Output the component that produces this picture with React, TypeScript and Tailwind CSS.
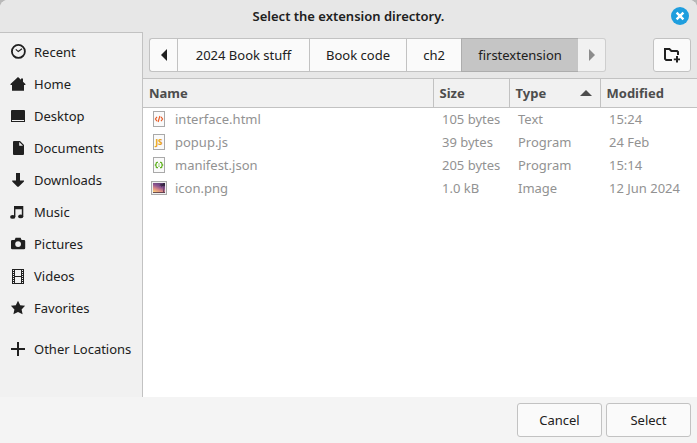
import React, { useState } from "react";

interface Place {
  name: string;
  icon: React.ReactNode;
}

interface FileEntry {
  name: string;
  size: string;
  type: string;
  modified: string;
  icon: React.ReactNode;
}

// 16px symbolic icons
function Symbolic({ children }: { children: React.ReactNode }) {
  return (
    <svg viewBox="0 0 16 16" className="size-4 shrink-0" fill="currentColor" aria-hidden="true">
      {children}
    </svg>
  );
}

// Small sheet of paper, used behind the file type marks
function Sheet({ children }: { children: React.ReactNode }) {
  return (
    <svg viewBox="0 0 16 16" className="size-4 shrink-0" aria-hidden="true">
      <rect x="2.5" y="0.5" width="11" height="15" fill="#fafafa" stroke="#a9a9a9" />
      {children}
    </svg>
  );
}

const places: Place[] = [
  {
    name: "Recent",
    icon: (
      <Symbolic>
        <circle cx="8.4" cy="7.4" r="6.5" fill="none" stroke="currentColor" strokeWidth="1.8" />
        <path d="M5.8 5.4 8.3 7.6 12 4.8" fill="none" stroke="currentColor" strokeWidth="1.2" />
      </Symbolic>
    ),
  },
  {
    name: "Home",
    icon: (
      <Symbolic>
        <path d="M8 1 11 3.8V2.5h2v3.2L15.4 8v1H14v5.7H2V9H.5V8z" />
      </Symbolic>
    ),
  },
  {
    name: "Desktop",
    icon: (
      <Symbolic>
        <path
          fillRule="evenodd"
          d="M2 2h12a1 1 0 0 1 1 1v11H1V3a1 1 0 0 1 1-1zM2 12v1h12v-1z"
        />
      </Symbolic>
    ),
  },
  {
    name: "Documents",
    icon: (
      <Symbolic>
        <path
          fillRule="evenodd"
          d="M4 1h6l4 4v9a1 1 0 0 1-1 1H4a1 1 0 0 1-1-1V2a1 1 0 0 1 1-1zM9.2 2v3.8H13z"
        />
      </Symbolic>
    ),
  },
  {
    name: "Downloads",
    icon: (
      <Symbolic>
        <path d="M6 1h4v7.6h4v.8L8.6 14.8H7.4L2.2 9.4v-.8H6z" />
      </Symbolic>
    ),
  },
  {
    name: "Music",
    icon: (
      <Symbolic>
        <path d="M4 2h9.3v10.4h-1.5V5.2H5.4v7.8H4z" />
        <ellipse cx="2.7" cy="12.9" rx="2.6" ry="1.9" />
        <ellipse cx="10.7" cy="12.4" rx="2.6" ry="1.9" />
      </Symbolic>
    ),
  },
  {
    name: "Pictures",
    icon: (
      <Symbolic>
        <path
          fillRule="evenodd"
          d="M5.6 1.7h5L11.6 4H14a1.2 1.2 0 0 1 1.2 1.2V12a1.2 1.2 0 0 1-1.2 1.2H2.2A1.2 1.2 0 0 1 1 12V5.2A1.2 1.2 0 0 1 2.2 4h2.4zM8.1 5.2a2.9 2.9 0 1 0 0 5.8 2.9 2.9 0 0 0 0-5.8z"
        />
      </Symbolic>
    ),
  },
  {
    name: "Videos",
    icon: (
      <Symbolic>
        <path
          fillRule="evenodd"
          d="M2 1h12v15H2zM5 2v6h6V2zM5 9v6h6V9zM3 2v1h1V2zM3 4v1h1V4zM3 6v1h1V6zM3 8v1h1V8zM3 10v1h1v-1zM3 12v1h1v-1zM3 14v1h1v-1zM12 2v1h1V2zM12 4v1h1V4zM12 6v1h1V6zM12 8v1h1V8zM12 10v1h1v-1zM12 12v1h1v-1zM12 14v1h1v-1z"
        />
      </Symbolic>
    ),
  },
  {
    name: "Favorites",
    icon: (
      <Symbolic>
        <path d="M8 .8 10.2 5.2 15.1 5.8 11.6 9.4 12.6 14.3 8 12 3.4 14.3 4.4 9.4.9 5.8 5.8 5.2z" />
      </Symbolic>
    ),
  },
];

const files: FileEntry[] = [
  {
    name: "interface.html",
    size: "105 bytes",
    type: "Text",
    modified: "15:24",
    icon: (
      <Sheet>
        <path
          d="M6 5.8 4.4 8 6 10.2M10 5.8 11.6 8 10 10.2M8.9 5 7.1 11"
          fill="none"
          stroke="#e8602c"
          strokeWidth="1.2"
        />
      </Sheet>
    ),
  },
  {
    name: "popup.js",
    size: "39 bytes",
    type: "Program",
    modified: "24 Feb",
    icon: (
      <Sheet>
        <text
          x="8"
          y="11"
          fontSize="8"
          fontWeight="800"
          textAnchor="middle"
          fill="#e8a520"
        >
          JS
        </text>
      </Sheet>
    ),
  },
  {
    name: "manifest.json",
    size: "205 bytes",
    type: "Program",
    modified: "15:14",
    icon: (
      <Sheet>
        <path
          d="M7 5.4H6q-.8 0-.8.9v.8L4.3 8l.9.9v.8q0 .9.8.9h1M9 5.4h1q.8 0 .8.9v.8l.9.9-.9.9v.8q0 .9-.8.9H9"
          fill="none"
          stroke="#62b323"
          strokeWidth="1.3"
        />
        <path d="M7.4 6.4h1.2v1.2H7.4zM7.4 8.4h1.2v1.4H7.4z" fill="#62b323" />
      </Sheet>
    ),
  },
  {
    name: "icon.png",
    size: "1.0 kB",
    type: "Image",
    modified: "12 Jun 2024",
    icon: (
      <svg viewBox="0 0 16 16" className="size-4 shrink-0" aria-hidden="true">
        <defs>
          <linearGradient id="sunset" x1="0.8" y1="0" x2="0.3" y2="1">
            <stop offset="0" stopColor="#563d70" />
            <stop offset="0.4" stopColor="#8d5490" />
            <stop offset="0.7" stopColor="#dd8a86" />
            <stop offset="1" stopColor="#f6cc78" />
          </linearGradient>
        </defs>
        <rect x="0.5" y="1.5" width="15" height="13" fill="#f0f0f0" stroke="#a9a9a9" />
        <rect x="2" y="3" width="12" height="10" fill="url(#sunset)" />
        <path
          d="M8.4 5.4 10 4l1.2.4L12.4 3H14v3.4l-1-1-.6.6.2 3 .6 3h-.8l-.2-5.4-.6-.8-1.2 1.6.2-2z"
          fill="#33243f"
        />
        <path d="M2 12.2h12v.8H2z" fill="#40273f" />
      </svg>
    ),
  },
];

const crumbs = [
  { name: "2024 Book stuff", width: "w-[132px]" },
  { name: "Book code", width: "w-[97px]" },
  { name: "ch2", width: "w-[55px]" },
  { name: "firstextension", width: "w-[117px]" },
];

function TitleBar() {
  return (
    <header className="grid h-8 shrink-0 grid-cols-[1fr_auto_1fr] items-center bg-[#e7e7e7] px-2">
      <h1 className="col-start-2 font-semibold">Select the extension directory.</h1>
      <button
        type="button"
        aria-label="Close"
        className="flex size-[18px] items-center justify-center justify-self-end rounded-full bg-[#1f9ede] text-white"
      >
        <svg viewBox="0 0 10 10" className="size-2.5" aria-hidden="true">
          <path d="M1.6 1.6 8.4 8.4M8.4 1.6 1.6 8.4" stroke="currentColor" strokeWidth="2.4" />
        </svg>
      </button>
    </header>
  );
}

function PlaceButton({ name, icon }: Place) {
  return (
    <button type="button" className="flex h-8 w-full items-center gap-2 pl-2.5 text-left">
      {icon}
      {name}
    </button>
  );
}

function Sidebar() {
  return (
    <nav
      aria-label="Places"
      className="w-[143px] shrink-0 border-t border-r border-[#c2c2c2] bg-[#f1f1f1] pt-[3px]"
    >
      <ul>
        {places.map((place) => (
          <li key={place.name}>
            <PlaceButton name={place.name} icon={place.icon} />
          </li>
        ))}
        <li className="pt-[9px]">
          <PlaceButton
            name="Other Locations"
            icon={
              <Symbolic>
                <path d="M7 1h2v6h6v2H9v6H7V9H1V7h6z" />
              </Symbolic>
            }
          />
        </li>
      </ul>
    </nav>
  );
}

function PathBar({ current, onSelect }: { current: string; onSelect: (name: string) => void }) {
  return (
    <div className="flex h-[46px] shrink-0 items-center justify-between bg-[#e7e7e7] px-1.5">
      <div className="flex h-[34px]">
        <button
          type="button"
          aria-label="Scroll back"
          className="flex w-7 items-center justify-center rounded-l-[3px] border border-r-0 border-[#c2c2c2] bg-[#fafafa]"
        >
          <svg viewBox="0 0 6 12" className="h-3 w-1.5" fill="currentColor" aria-hidden="true">
            <path d="M6 0v12L0 6z" />
          </svg>
        </button>
        {crumbs.map((crumb) => (
          <button
            key={crumb.name}
            type="button"
            onClick={() => onSelect(crumb.name)}
            className={`border border-r-0 ${crumb.width} ${
              crumb.name === current
                ? "border-[#adadad] bg-[#c5c5c5]"
                : "border-[#c2c2c2] bg-[#fafafa]"
            }`}
          >
            {crumb.name}
          </button>
        ))}
        <button
          type="button"
          disabled
          aria-label="Scroll forward"
          className="flex w-7 items-center justify-center rounded-r-[3px] border border-l-0 border-[#cecece] bg-[#f1f1f1] text-[#8c8c8c]"
        >
          <svg viewBox="0 0 6 12" className="h-3 w-1.5" fill="currentColor" aria-hidden="true">
            <path d="M0 0v12l6-6z" />
          </svg>
        </button>
      </div>
      <button
        type="button"
        aria-label="Create folder"
        className="flex h-[34px] w-[38px] items-center justify-center rounded-[3px] border border-[#c2c2c2] bg-[#fafafa]"
      >
        <Symbolic>
          <path
            d="M8 13H2.2L1 11.8V2h4.4l2 2H13l1 1v3"
            fill="none"
            stroke="currentColor"
            strokeWidth="2"
          />
          <path d="M12 9h2v2.4h2.2v1.8H14v2.4h-2v-2.4H9.8v-1.8H12z" />
        </Symbolic>
      </button>
    </div>
  );
}

function FileTable() {
  return (
    <table className="w-full table-fixed border-collapse text-left">
      <colgroup>
        <col />
        <col className="w-[76px]" />
        <col className="w-[91px]" />
        <col className="w-[97px]" />
      </colgroup>
      <thead>
        <tr className="h-[29px] border-y border-[#c2c2c2] bg-[#f1f1f1] text-[#4d4d4d]">
          <th className="border-r border-[#c2c2c2] px-1.5 py-0">
            <button type="button" className="font-bold">Name</button>
          </th>
          <th className="border-r border-[#c2c2c2] px-1.5 py-0">
            <button type="button" className="font-bold">Size</button>
          </th>
          <th aria-sort="ascending" className="border-r border-[#c2c2c2] py-0 pr-2 pl-1.5">
            <button type="button" className="flex w-full items-center justify-between font-bold">
              Type
              <svg viewBox="0 0 12 6" className="h-1.5 w-3" fill="currentColor" aria-hidden="true">
                <path d="M6 0l6 6H0z" />
              </svg>
            </button>
          </th>
          <th className="px-1.5 py-0">
            <button type="button" className="font-bold">Modified</button>
          </th>
        </tr>
      </thead>
      <tbody className="text-[#929292]">
        {files.map((file) => (
          <tr key={file.name} className="h-[23px]">
            <td className="py-0 pl-2">
              <div className="flex items-center gap-2">
                {file.icon}
                {file.name}
              </div>
            </td>
            <td className="py-0 pl-[9px] whitespace-nowrap">{file.size}</td>
            <td className="py-0 pl-[9px] whitespace-nowrap">{file.type}</td>
            <td className="py-0 pl-[9px] whitespace-nowrap">{file.modified}</td>
          </tr>
        ))}
      </tbody>
    </table>
  );
}

function App() {
  const [current, setCurrent] = useState("firstextension");

  return (
    <div className="bg-[#b9b9b9]">
      <div className="flex min-h-screen flex-col overflow-hidden rounded-t-lg bg-[#f4f4f4] font-['Noto_Sans','Open_Sans',sans-serif] text-[13px] leading-5 text-[#202020]">
        <TitleBar />
        <main className="flex grow">
          <Sidebar />
          <section className="flex min-w-0 grow flex-col bg-white">
            <PathBar current={current} onSelect={setCurrent} />
            <FileTable />
          </section>
        </main>
        <footer className="flex shrink-0 justify-end gap-1 p-1.5">
          <button type="button" className="h-[34px] w-[85px] rounded-[3px] border border-[#c2c2c2] bg-[#fafafa]">
            Cancel
          </button>
          <button type="button" className="h-[34px] w-[85px] rounded-[3px] border border-[#c2c2c2] bg-[#fafafa]">
            Select
          </button>
        </footer>
      </div>
    </div>
  );
}

export default App;
